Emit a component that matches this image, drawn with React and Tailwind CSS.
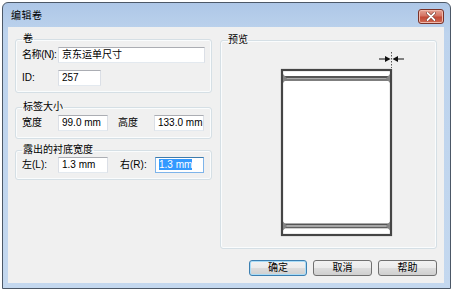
import React from "react";

const font = "font-['Liberation_Sans','Noto_Sans_CJK_SC',sans-serif]";

function Field({ w, children, focused }) {
  return (
    <div
      className={`h-[16px] ${w} shrink-0 border bg-white pl-[3px] text-[10px] leading-[14px] text-black whitespace-nowrap overflow-hidden ${
        focused
          ? "border-[#7eb4ea] border-t-[#3d7bad]"
          : "border-[#dbdfe6] border-t-[#abadb3] border-b-[#e3e9ef]"
      }`}
    >
      {children}
    </div>
  );
}

function Label({ w, className = "", children }) {
  return (
    <span className={`${w} shrink-0 whitespace-nowrap text-[10px] leading-[12px] text-black ${className}`}>
      {children}
    </span>
  );
}

function Group({ title, className, children }) {
  return (
    <fieldset
      className={`border border-[#d5dfe5] rounded-[3px] shadow-[inset_0_0_0_1px_#fafcfd] ${className}`}
    >
      <legend className="ml-[6px] px-[1px] text-[10px] leading-[12px] text-black">
        {title}
      </legend>
      {children}
    </fieldset>
  );
}

function Btn({ children, primary }) {
  return (
    <button
      className={`h-[16px] rounded-[3px] border text-[10px] leading-[14px] text-black bg-[linear-gradient(#f2f2f2,#ebebeb_50%,#dddddd_50%,#cfcfcf)] ${
        primary
          ? "w-[58px] border-[#3c7fb1] shadow-[inset_0_0_0_1px_#a9dcf7]"
          : "w-[59px] border-[#707070]"
      }`}
    >
      {children}
    </button>
  );
}

function Preview() {
  return (
    <svg width="215" height="202" viewBox="0 0 215 202">
      <rect x="61" y="24" width="109" height="165" fill="#fff" stroke="#454545" strokeWidth="2.2" />
      {/* top liner edge */}
      <rect x="62" y="30" width="107" height="2" fill="#555" />
      <rect x="62" y="32" width="107" height="1.2" fill="#aaa" />
      <rect x="62" y="33.2" width="107" height="1.6" fill="#606060" />
      <polygon points="62,28 66,32.4 62,37" fill="#858585" />
      <polygon points="169,28 165,32.4 169,37" fill="#858585" />
      {/* bottom liner edge */}
      <rect x="62" y="177.5" width="107" height="2" fill="#555" />
      <rect x="62" y="179.5" width="107" height="1.2" fill="#aaa" />
      <rect x="62" y="180.7" width="107" height="1.6" fill="#606060" />
      <polygon points="62,175.5 66,180 62,184.5" fill="#858585" />
      <polygon points="169,175.5 165,180 169,184.5" fill="#858585" />
      {/* dimension marker */}
      <line x1="158" y1="13" x2="165" y2="13" stroke="#111" strokeWidth="1" />
      <polygon points="164,10 169.5,13 164,16" fill="#111" />
      <line x1="176" y1="13" x2="183" y2="13" stroke="#111" strokeWidth="1" />
      <polygon points="177,10 171.5,13 177,16" fill="#111" />
      <line x1="170.5" y1="6" x2="170.5" y2="22" stroke="#555" strokeWidth="1" strokeDasharray="1.5 1.5" />
    </svg>
  );
}

export default function App() {
  return (
    <div className={`w-[453px] h-[293px] bg-white pt-[2px] pl-[2px] ${font}`}>
      <div className="w-[449px] h-[287px] border border-[#4c5867] rounded-t-[6px] bg-[linear-gradient(#aec7e7,#bdd3ed_30px,#c4d8ef)] flex flex-col">
        {/* title bar */}
        <div className="h-[24px] flex items-start justify-between pl-[8px] pr-[6px]">
          <span className="mt-[7px] text-[10px] leading-[12px] text-black tracking-[0.5px]">编辑卷</span>
          <div className="mt-[6px] w-[26px] h-[15px] rounded-[3px] border border-[#7a3228] bg-[linear-gradient(#e5a394,#d47363_45%,#c24a37_55%,#d06a55)] flex items-center justify-center shadow-[inset_0_0_0_1px_#efb9ad]">
            <svg width="10" height="9" viewBox="0 0 10 9">
              <path d="M1.5 1 L8.5 8 M8.5 1 L1.5 8" stroke="#6b2a20" strokeWidth="3" strokeLinecap="round" />
              <path d="M1.5 1 L8.5 8 M8.5 1 L1.5 8" stroke="#fff" strokeWidth="1.8" strokeLinecap="round" />
            </svg>
          </div>
        </div>

        {/* client area */}
        <div className="ml-[5px] w-[436px] h-[256px] bg-[#f0f0f0] flex items-start pl-[7px] gap-[8px]">
          {/* left column */}
          <div className="w-[197px] flex flex-col">
            <Group title="卷" className="mt-[6px] pb-[6px]">
              <div className="mt-[2px] flex items-center pl-[6px]">
                <Label w="w-[36px]" className="tracking-[-0.4px]">名称(N):</Label>
                <Field w="w-[147px]">京东运单尺寸</Field>
              </div>
              <div className="mt-[7px] flex items-center pl-[6px]">
                <Label w="w-[36px]">ID:</Label>
                <Field w="w-[43px]">257</Field>
              </div>
            </Group>

            <Group title="标签大小" className="mt-[8px] pb-[7px]">
              <div className="mt-[2px] flex items-center pl-[6px]">
                <Label w="w-[36px]">宽度</Label>
                <Field w="w-[50px]">99.0 mm</Field>
                <Label w="w-[36px]" className="ml-[10px]">高度</Label>
                <Field w="w-[50px]">133.0 mm</Field>
              </div>
            </Group>

            <Group title="露出的衬底宽度" className="mt-[5px] pb-[6px]">
              <div className="mt-[1px] flex items-center pl-[6px]">
                <Label w="w-[36px]">左(L):</Label>
                <Field w="w-[50px]">1.3 mm</Field>
                <Label w="w-[35px]" className="ml-[12px]">右(R):</Label>
                <Field w="w-[49px]" focused>
                  <span className="bg-[#3399ff] text-white">1.3 mm</span>
                </Field>
              </div>
            </Group>
          </div>

          {/* right column */}
          <div className="w-[217px] flex flex-col">
            <fieldset className="mt-[7px] border border-[#d5dfe5] rounded-[3px] shadow-[inset_0_0_0_1px_#fafcfd]">
              <legend className="ml-[7px] text-[10px] leading-[12px] text-black">预览</legend>
              <Preview />
            </fieldset>
            <div className="mt-[11px] flex justify-end gap-[6px]">
              <Btn primary>确定</Btn>
              <Btn>取消</Btn>
              <Btn>帮助</Btn>
            </div>
          </div>
        </div>
      </div>
    </div>
  );
}
